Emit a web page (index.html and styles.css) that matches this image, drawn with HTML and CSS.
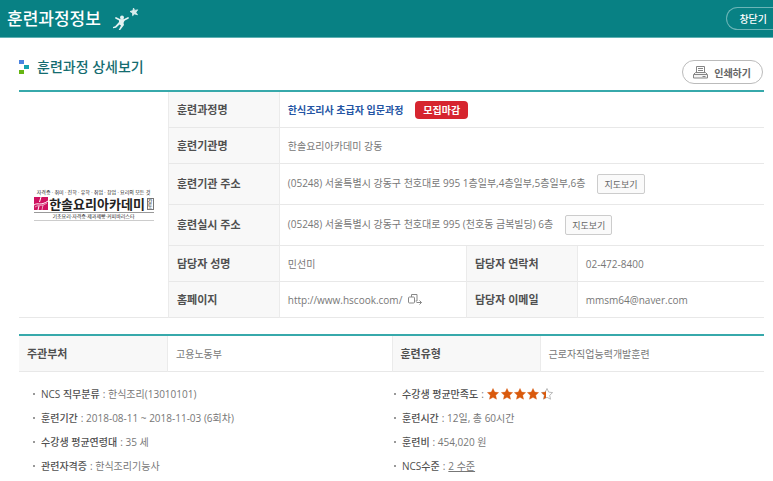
FILE: index.html
```
<!DOCTYPE html>
<html lang="ko">
<head>
  <meta charset="UTF-8">
  <meta name="viewport" content="width=device-width, initial-scale=1.0">
  <title>훈련과정정보</title>
  <link rel="stylesheet" href="styles.css">
</head>
<body>
  <!-- Header -->
  <header class="pop-header">
    <h1>훈련과정정보</h1>
    <svg class="star-man" width="26" height="24" viewBox="0 0 26 24" aria-hidden="true">
      <path fill="#d9ecec" stroke="#d9ecec" stroke-width=".8" d="M20.500 1l1.200 2.400 3-.6-1.800 2.500 1.600 2.500-2.900-.9-2 1.800-.1-2.800-2.500-1.400 2.900-.9z"/>
      <circle fill="#e4f2f2" cx="9" cy="10.500" r="2"/>
      <path fill="none" stroke="#e4f2f2" stroke-width="1.700" stroke-linecap="round" stroke-linejoin="round" d="M3 11l4 2h4l4-2"/>
      <path fill="#e4f2f2" d="M6 12.500h6l-1.500 3.500.5 2-3.800 5H5.700l2.300-4.500-1.500-1L3 20.700l-3 .5v-1.200l2.200-.8L6 15z"/>
    </svg>
    <button type="button" class="btn-close">창닫기</button>
  </header>

  <main class="content">
    <div class="title-row">
      <h2>
        <svg width="10" height="14" viewBox="0 0 10 14" aria-hidden="true">
          <path fill="#4b83e0" d="M0 0h5v4H0z"/>
          <path fill="#14a3b0" d="M5 5h5v4H5z"/>
          <path fill="#66b512" d="M0 10h5v4H0z"/>
        </svg>
        훈련과정 상세보기
      </h2>
      <button type="button" class="btn-print">
        <svg width="15" height="14" viewBox="0 0 15 14" fill="none" stroke="#858585" aria-hidden="true">
          <path d="M3.500 7V1.500h8V7M5 3.500h5M5 5.500h5"/>
          <path fill="#f4f4f4" d="M2.500 7.500h10l2 2v3.500H.5V9.500z"/>
          <path d="M1 9.500h13M9.500 11.500h3"/>
        </svg>
        인쇄하기
      </button>
    </div>

    <!-- Training institute -->
    <table class="info-table">
      <colgroup>
        <col class="w20"><col class="w15"><col class="w25"><col class="w15"><col class="w25">
      </colgroup>
      <tbody>
        <tr>
          <td class="logo-cell" rowspan="6">
            <div class="logo">
              <div class="logo-top">자격증 · 취미 · 진학 · 유학 · 취업 · 창업 · 요리의 모든 것</div>
              <div class="logo-main">
                <svg width="14" height="13" viewBox="0 0 14 13" aria-hidden="true">
                  <path fill="#cf1260" d="M0 0h14v13H0z"/>
                  <path fill="none" stroke="#fff" d="M7 0L5.500 5M5 9l-1 4M0 8c4-3 6 1.500 14-4"/>
                  <path fill="none" stroke="#fff" stroke-width=".6" d="M1 10c5-3 6 0 12-4M9 8l-1 5"/>
                </svg>
                <strong>한솔요리아카데미</strong>
                <span class="logo-branch">강동</span>
              </div>
              <div class="logo-sub">기초요리·자격증·제과제빵·커피바리스타</div>
            </div>
          </td>
          <th scope="row">훈련과정명</th>
          <td colspan="3"><a href="#" class="course">한식조리사 초급자 입문과정</a><span class="badge">모집마감</span></td>
        </tr>
        <tr>
          <th scope="row">훈련기관명</th>
          <td colspan="3">한솔요리아카데미 강동</td>
        </tr>
        <tr class="tall">
          <th scope="row">훈련기관 주소</th>
          <td colspan="3">(05248) 서울특별시 강동구 천호대로 995 1층일부,4층일부,5층일부,6층<button type="button" class="btn-map">지도보기</button></td>
        </tr>
        <tr class="tall">
          <th scope="row">훈련실시 주소</th>
          <td colspan="3">(05248) 서울특별시 강동구 천호대로 995 (천호동 금복빌딩) 6층<button type="button" class="btn-map">지도보기</button></td>
        </tr>
        <tr>
          <th scope="row">담당자 성명</th>
          <td>민선미</td>
          <th scope="row">담당자 연락처</th>
          <td>02-472-8400</td>
        </tr>
        <tr>
          <th scope="row">홈페이지</th>
          <td>
            <a href="http://www.hscook.com/" class="home">http://www.hscook.com/
              <svg width="15" height="11" viewBox="0 0 15 11" fill="none" stroke="#888" aria-hidden="true">
                <path d="M3.500 3V.5h5.500V7H7.500"/>
                <rect x=".5" y="3" width="6" height="6" rx="1"/>
                <path d="M8.500 8.500h5M11.500 6.500l2 2-2 2"/>
              </svg>
            </a>
          </td>
          <th scope="row">담당자 이메일</th>
          <td>mmsm64@naver.com</td>
        </tr>
      </tbody>
    </table>

    <!-- Training type -->
    <table class="info-table type-table">
      <colgroup>
        <col class="w20"><col class="w30"><col class="w20"><col class="w30">
      </colgroup>
      <tbody>
        <tr>
          <th scope="row">주관부처</th>
          <td>고용노동부</td>
          <th scope="row">훈련유형</th>
          <td>근로자직업능력개발훈련</td>
        </tr>
      </tbody>
    </table>

    <div class="detail">
      <ul>
        <li><b>NCS 직무분류</b> : 한식조리(13010101)</li>
        <li><b>훈련기간</b> : 2018-08-11 ~ 2018-11-03 (6회차)</li>
        <li><b>수강생 평균연령대</b> : 35 세</li>
        <li><b>관련자격증</b> : 한식조리기능사</li>
      </ul>
      <ul>
        <li>
          <b>수강생 평균만족도</b> :
          <svg class="stars" width="66" height="12" viewBox="0 0 66 12" role="img" aria-label="4.2">
            <defs>
              <path id="star" d="M6 .5l1.700 3.600 3.900.5-2.900 2.700.8 3.900L6 9.300l-3.500 1.900.8-3.900L.4 4.600l3.900-.5z"/>
              <clipPath id="part"><path d="M54 0h5v12h-5z"/></clipPath>
            </defs>
            <g fill="#d9590c" stroke="#d9590c" stroke-width=".4">
              <use href="#star"/>
              <use href="#star" x="14"/>
              <use href="#star" x="27"/>
              <use href="#star" x="40"/>
            </g>
            <use href="#star" x="54" fill="#fff" stroke="#aaa" stroke-width=".8"/>
            <g clip-path="url(#part)"><use href="#star" x="54" fill="#d9590c"/></g>
          </svg>
        </li>
        <li><b>훈련시간</b> : 12일, 총 60시간</li>
        <li><b>훈련비</b> : 454,020 원</li>
        <li><b>NCS수준</b> : <a href="#" class="level">2 수준</a></li>
      </ul>
    </div>
  </main>
</body>
</html>
```

FILE: styles.css
```
* {
  box-sizing: border-box;
}
body {
  margin: 0;
  background: #fff;
  color: #777;
  font-family: "Open Sans", "Noto Sans CJK KR", sans-serif;
  font-size: 10px;
  line-height: 16px;
}
h1, h2 {
  margin: 0;
}
button {
  font-family: inherit;
  cursor: pointer;
}
a {
  color: inherit;
  text-decoration: none;
}

/* header */
.pop-header {
  display: flex;
  align-items: center;
  height: 38px;
  padding-left: 7px;
  background: #088184;
  border-bottom: 1px solid #5fb1b3;
  color: #fff;
}
.pop-header h1 {
  font-size: 17px;
  font-weight: 500;
  line-height: 24px;
}
.star-man {
  margin-left: 12px;
}
.btn-close {
  height: 23px;
  margin-left: auto;
  padding: 0 6px 0 12px;
  border: 1px solid #6bb5b7;
  border-right: 0;
  border-radius: 12px 0 0 12px;
  background: none;
  color: #fff;
  font-size: 10px;
  font-weight: 500;
  line-height: 16px;
}

.content {
  padding: 20px 9px 0 19px;
}
.title-row {
  display: flex;
  align-items: flex-start;
  justify-content: space-between;
  height: 32px;
}
.title-row h2 {
  display: flex;
  align-items: center;
  gap: 8px;
  color: #146c70;
  font-size: 14px;
  font-weight: 500;
  line-height: 18px;
}
.btn-print {
  display: flex;
  align-items: center;
  gap: 6px;
  height: 24px;
  margin: 2px 1px 0 0;
  padding: 0 11px 0 10px;
  border: 1px solid #bbb;
  border-radius: 12px;
  background: #fff;
  color: #666;
  font-size: 10px;
  font-weight: 700;
}

/* tables */
.info-table {
  width: 100%;
  table-layout: fixed;
  border-collapse: separate;
  border-spacing: 0;
  border-top: 2px solid #37a9ab;
}
.w15 { width: 15%; }
.w20 { width: 20%; }
.w25 { width: 25%; }
.w30 { width: 30%; }
.info-table th,
.info-table td {
  height: 36px;
  padding: 0 8px;
  border-bottom: 1px solid #e8e8e8;
  text-align: left;
  white-space: nowrap;
}
.info-table tr.tall th,
.info-table tr.tall td {
  height: 41px;
}
.info-table th {
  border-left: 1px solid #ebebeb;
  border-right: 1px solid #ebebeb;
  background: #f8f8f8;
  color: #505050;
  font-size: 11px;
  font-weight: 700;
}
.info-table .logo-cell {
  padding: 0;
}
.course {
  color: #2455a4;
  font-weight: 700;
}
.badge {
  display: inline-block;
  margin-left: 12px;
  padding: 1px 8px;
  border-radius: 4px;
  background: #d6252f;
  color: #fff;
  font-weight: 700;
}
.btn-map {
  height: 20px;
  margin-left: 12px;
  padding: 0 6px;
  border: 1px solid #ccc;
  border-radius: 2px;
  background: #fafafa;
  color: #666;
  font-size: 9px;
  vertical-align: middle;
}
.home svg {
  margin-left: 3px;
  vertical-align: -1px;
}

/* academy logo */
.logo {
  width: 120px;
  margin: 0 auto;
  color: #222;
  font-size: 5px;
  line-height: 7px;
  text-align: center;
}
.logo-main {
  display: flex;
  align-items: center;
  justify-content: space-between;
  height: 17px;
  border-bottom: 1px solid #999;
}
.logo-main strong {
  font-size: 13px;
  line-height: 16px;
}
.logo-branch {
  width: 7px;
  border: 1px solid #777;
  line-height: 5px;
  white-space: normal;
  word-break: break-all;
}
.logo-sub {
  border-bottom: 1px solid #ccc;
}

.type-table {
  margin-top: 16px;
}
.type-table th:first-child {
  border-left: 0;
}

/* detail list */
.detail {
  display: grid;
  grid-template-columns: 1fr 1fr;
  padding: 10px 9px 10px 14px;
}
.detail ul {
  margin: 0;
  padding: 0;
  list-style: none;
}
.detail li {
  display: flex;
  align-items: center;
  gap: 3px;
  height: 24px;
  white-space: nowrap;
}
.detail li::before {
  content: "";
  width: 2px;
  height: 2px;
  margin-right: 3px;
  background: #999;
}
.detail b {
  color: #505050;
  font-weight: 500;
}
.level {
  text-decoration: underline;
}
```
